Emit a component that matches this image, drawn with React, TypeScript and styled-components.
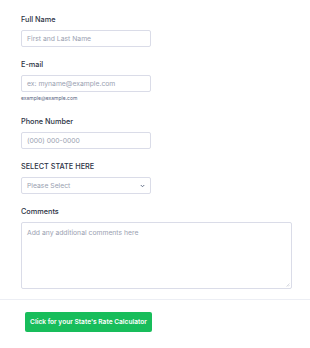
import styled, { createGlobalStyle } from 'styled-components';

const GlobalStyle = createGlobalStyle`
    body {
        margin: 0;
        background: #ffffff;
        font-family: Inter, "Noto Sans", sans-serif;
    }
`;

const Page = styled.div`
    width: 310px;
    height: 348px;
    background: #ffffff;
    overflow: hidden;
`;

const FormBody = styled.div`
    display: flex;
    flex-direction: column;
    padding: 15px 18px 0 21px;
`;

const Field = styled.div<{ $gap?: number }>`
    display: flex;
    flex-direction: column;
    margin-bottom: ${(p) => (p.$gap ?? 13)}px;
`;

const Label = styled.label`
    font-size: 7.3px;
    line-height: 10px;
    font-weight: 500;
    color: #2c3345;
    margin-bottom: 5px;
`;

const TextInput = styled.div<{ $width?: number }>`
    box-sizing: border-box;
    width: ${(p) => p.$width ?? 130}px;
    height: 17px;
    border: 1px solid #dadce8;
    border-radius: 2px;
    padding: 0 5px;
    display: flex;
    align-items: center;
    justify-content: space-between;
    font-size: 6.8px;
    color: #9aa1b1;
`;

const TextArea = styled.div`
    box-sizing: border-box;
    width: 271px;
    height: 67px;
    border: 1px solid #dadce8;
    border-radius: 2px;
    padding: 5px;
    font-size: 6.8px;
    color: #9aa1b1;
    position: relative;
`;

const Grip = styled.svg`
    position: absolute;
    right: 1px;
    bottom: 1px;
`;

const SubLabel = styled.div`
    font-size: 5px;
    line-height: 7px;
    color: #57647e;
    margin-top: 3px;
`;

const Divider = styled.div`
    height: 1px;
    background: #eceef4;
`;

const Footer = styled.div`
    display: flex;
    padding: 12px 25px;
`;

const SubmitButton = styled.button`
    width: 127px;
    height: 20px;
    border: none;
    border-radius: 2px;
    background: #18bd5b;
    color: #ffffff;
    font-family: Inter, "Noto Sans", sans-serif;
    font-size: 6.6px;
    font-weight: 600;
    padding: 0;
`;

const App = () => {
    return (
        <Page>
            <GlobalStyle />
            <FormBody>
                <Field>
                    <Label>Full Name</Label>
                    <TextInput>First and Last Name</TextInput>
                </Field>
                <Field $gap={15}>
                    <Label>E-mail</Label>
                    <TextInput>ex: myname@example.com</TextInput>
                    <SubLabel>example@example.com</SubLabel>
                </Field>
                <Field>
                    <Label>Phone Number</Label>
                    <TextInput>(000) 000-0000</TextInput>
                </Field>
                <Field>
                    <Label>SELECT STATE HERE</Label>
                    <TextInput>
                        Please Select
                        <svg width="5" height="4" viewBox="0 0 10 8">
                            <path d="M1.5 2 L5 5.5 L8.5 2" fill="none" stroke="#57647e" strokeWidth="1.8" />
                        </svg>
                    </TextInput>
                </Field>
                <Field $gap={10}>
                    <Label>Comments</Label>
                    <TextArea>
                        Add any additional comments here
                        <Grip width="5" height="5" viewBox="0 0 10 10">
                            <path d="M9 3 L3 9 M9 6 L6 9" stroke="#b5b9c6" strokeWidth="1" />
                        </Grip>
                    </TextArea>
                </Field>
            </FormBody>
            <Divider />
            <Footer>
                <SubmitButton>Click for your State's Rate Calculator</SubmitButton>
            </Footer>
        </Page>
    );
};

export default App;
